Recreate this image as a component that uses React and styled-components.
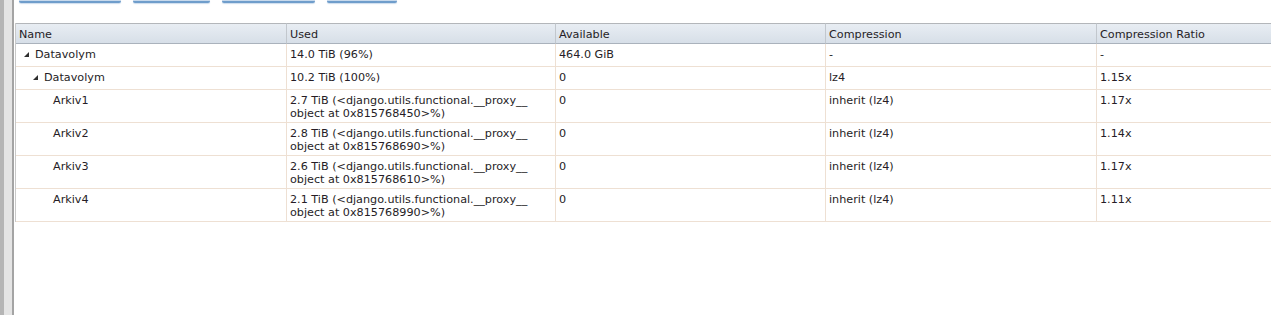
import styled, { createGlobalStyle } from 'styled-components';

const GlobalStyle = createGlobalStyle`
  html, body {
    margin: 0;
    padding: 0;
    height: 100%;
    overflow: hidden;
    background: #fff;
  }
  #root {
    height: 100%;
  }
`;

// tree data for the volume list
const rows = [
  { name: 'Datavolym', level: 0, open: true, used: '14.0 TiB (96%)', avail: '464.0 GiB', comp: '-', ratio: '-' },
  { name: 'Datavolym', level: 1, open: true, used: '10.2 TiB (100%)', avail: '0', comp: 'lz4', ratio: '1.15x' },
  { name: 'Arkiv1', level: 2, used: '2.7 TiB (<django.utils.functional.__proxy__ object at 0x815768450>%)', avail: '0', comp: 'inherit (lz4)', ratio: '1.17x' },
  { name: 'Arkiv2', level: 2, used: '2.8 TiB (<django.utils.functional.__proxy__ object at 0x815768690>%)', avail: '0', comp: 'inherit (lz4)', ratio: '1.14x' },
  { name: 'Arkiv3', level: 2, used: '2.6 TiB (<django.utils.functional.__proxy__ object at 0x815768610>%)', avail: '0', comp: 'inherit (lz4)', ratio: '1.17x' },
  { name: 'Arkiv4', level: 2, used: '2.1 TiB (<django.utils.functional.__proxy__ object at 0x815768990>%)', avail: '0', comp: 'inherit (lz4)', ratio: '1.11x' },
];

const buttons = [102, 77, 93, 70];

const App = () => {
  return (
    <Page>
      <GlobalStyle />
      {/* splitter on the left */}
      <Rail />
      <Panel>
        <Toolbar>
          {buttons.map((w, i) => (
            <ToolButton key={i} $w={w} />
          ))}
        </Toolbar>

        <Grid>
          <HeadCell>Name</HeadCell>
          <HeadCell>Used</HeadCell>
          <HeadCell>Available</HeadCell>
          <HeadCell>Compression</HeadCell>
          <HeadCell $last>Compression Ratio</HeadCell>

          {rows.map((r, i) => (
            <Row key={i}>
              <Cell>
                <TreeName>
                  <Indent $level={r.level} />
                  <Expander>
                    {r.open && (
                      <svg width="5" height="5" viewBox="0 0 5 5">
                        <polygon points="5,0 5,5 0,5" fill="#2e2e2e" />
                      </svg>
                    )}
                  </Expander>
                  <span>{r.name}</span>
                </TreeName>
              </Cell>
              <Cell>{r.used}</Cell>
              <Cell>{r.avail}</Cell>
              <Cell>{r.comp}</Cell>
              <Cell $last>{r.ratio}</Cell>
            </Row>
          ))}
        </Grid>
      </Panel>
    </Page>
  );
};

const Page = styled.div`
  display: flex;
  height: 315px;
  width: 1271px;
  font-family: "DejaVu Sans", Verdana, sans-serif;
  font-size: 11.2px;
  color: #261d26;
`;

const Rail = styled.div`
  width: 8px;
  flex: none;
  background: #e4e4e4;
  border-left: 4px solid #b5b5b5;
  border-right: 2px solid #a4a4a4;
`;

const Panel = styled.div`
  flex: 1;
  min-width: 0;
  background: #fff;
  padding-left: 1px;
  overflow: hidden;
`;

const Toolbar = styled.div`
  display: flex;
  gap: 12px;
  height: 23px;
  padding-left: 4px;
`;

const ToolButton = styled.div`
  width: ${({ $w }) => $w}px;
  height: 1px;
  background: #c7d9ec;
  border-bottom: 2px solid #6f9dcb;
  border-radius: 0 0 2px 2px;
  box-shadow: 0 1px 1px rgba(111, 157, 203, 0.35);
`;

const Grid = styled.div`
  display: grid;
  grid-template-columns: 271px 269px 270px 271px 1fr;
  border-left: 1px solid #c9c9c9;
  width: calc(100% + 20px);
`;

const HeadCell = styled.div`
  height: 21px;
  box-sizing: border-box;
  padding: 4px 3px 2px;
  line-height: 13px;
  background: linear-gradient(#e8edf3, #d7dfe8);
  border-top: 1px solid #b3b6ba;
  border-bottom: 1px solid #aab2bc;
  border-right: ${({ $last }) => ($last ? 'none' : '1px solid #c2c7cd')};
  white-space: nowrap;
`;

const Row = styled.div`
  display: contents;
`;

const Cell = styled.div`
  padding: 4px 3px 2px;
  line-height: 13px;
  min-height: 16px;
  border-bottom: 1px solid #eee0d3;
  border-right: ${({ $last }) => ($last ? 'none' : '1px solid #eee0d3')};
  overflow-wrap: break-word;
`;

const TreeName = styled.div`
  display: flex;
  align-items: flex-start;
`;

const Indent = styled.span`
  width: ${({ $level }) => $level * 9}px;
  flex: none;
`;

const Expander = styled.span`
  width: 16px;
  flex: none;
  display: flex;
  padding-left: 5px;
  padding-top: 4px;
  box-sizing: border-box;
`;

export default App;
